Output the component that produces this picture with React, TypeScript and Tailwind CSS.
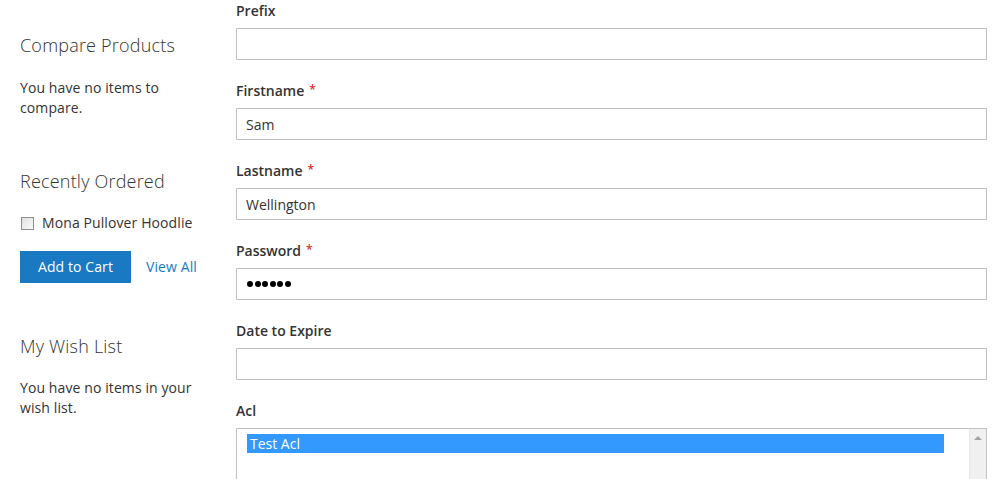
import React from 'react'

const font = { fontFamily: '"Open Sans", "Liberation Sans", sans-serif' }

function Field({ label, required, value, password }: { label: string; required?: boolean; value?: string; password?: boolean }) {
  return (
    <div className="mb-[21px]">
      <label className="flex h-5 items-center text-[14px] font-semibold leading-5 text-[#333]">
        {label}
        {required && <span className="ml-[5px] -mt-[3px] text-[12px] text-[#e02b27]">*</span>}
      </label>
      {password ? (
        <div className="mt-[7px] flex h-8 w-full items-center gap-[1.5px] border border-[#c2c2c2] bg-white pl-[10px]">
          {[0, 1, 2, 3, 4, 5].map(i => (
            <span key={i} className="h-[6px] w-[6px] rounded-full bg-black" />
          ))}
        </div>
      ) : (
        <input
          type="text"
          readOnly
          value={value || ''}
          className="mt-[7px] block h-8 w-full border border-[#c2c2c2] bg-white px-[9px] text-[14px] text-[#333] outline-none"
          style={font}
        />
      )}
    </div>
  )
}

export default function App() {
  return (
    <div className="h-[479px] overflow-hidden bg-white text-[#333]" style={font}>
      <div className="flex gap-5 pl-5 pr-[13px]">
        {/* Sidebar */}
        <aside className="w-[196px] shrink-0 text-[14px] leading-5 tracking-[0.1px]">
          <h2 className="mt-[34px] text-[18px] font-light leading-[22px] tracking-[0.2px]">Compare Products</h2>
          <p className="mt-[22px]">You have no items to compare.</p>

          <h2 className="mt-[52px] text-[18px] font-light leading-[22px] tracking-[0.2px]">Recently Ordered</h2>
          <div className="mt-[21px] flex h-5 items-center">
            <span className="ml-px h-[13px] w-[13px] border border-[#8f8f8f] bg-gradient-to-br from-[#e0e0e0] to-[#fafafa]" />
            <span className="ml-[8px]">Mona Pullover Hoodlie</span>
          </div>
          <div className="mt-[18px] flex items-center">
            <button className="h-8 w-[111px] bg-[#1979c3] text-[14px] font-normal text-white" style={font}>
              Add to Cart
            </button>
            <a className="ml-[15px] text-[#1979c3]">View All</a>
          </div>

          <h2 className="mt-[52px] text-[18px] font-light leading-[22px] tracking-[0.2px]">My Wish List</h2>
          <p className="mt-[21px]">You have no items in your wish list.</p>
        </aside>

        {/* Form */}
        <main className="flex-1 pt-px">
          <Field label="Prefix" />
          <Field label="Firstname" required value="Sam" />
          <Field label="Lastname" required value="Wellington" />
          <Field label="Password" required password />
          <Field label="Date to Expire" />
          <div>
            <label className="flex h-5 items-center text-[14px] font-semibold leading-5">Acl</label>
            <div className="mt-[7px] flex h-[100px] border border-[#c2c2c2] bg-white">
              <div className="flex-1 pl-[10px] pr-[25px] pt-[5px]">
                <div className="h-[19px] bg-[#3399ff] pl-[3px] text-[14px] leading-[19px] text-white">Test Acl</div>
              </div>
              <div className="flex w-[17px] justify-center border-l border-[#e8e8e8] bg-[#f0f0f0] pt-[7px]">
                <span className="h-0 w-0 border-x-[4px] border-b-[4px] border-x-transparent border-b-[#a3a3a3]" />
              </div>
            </div>
          </div>
        </main>
      </div>
    </div>
  )
}
